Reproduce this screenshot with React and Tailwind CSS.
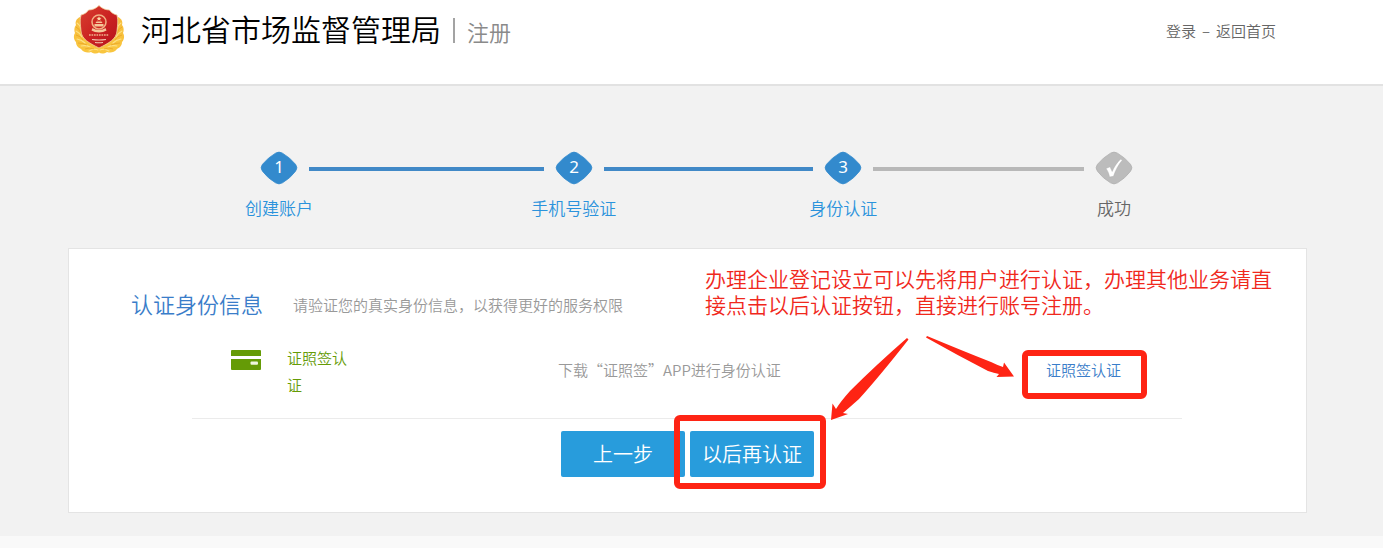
import React from "react";

const steps = [
  { label: "创建账户", mark: "1", grow: "grow-[235]", state: "done" },
  { label: "手机号验证", mark: "2", grow: "grow-[210]", state: "done" },
  { label: "身份认证", mark: "3", grow: "grow-[211]", state: "current" },
  { label: "成功", mark: "", grow: "", state: "pending" },
];

// Label and line colors for each step state
const labelStyles = {
  done: "text-[#2b93dc]",
  current: "text-[#2b93dc]",
  pending: "text-[#666666]",
};

const lineStyles = {
  done: "bg-[#4189c7]",
  current: "bg-[#b8b8b8]",
};

const Emblem = () => (
  <svg className="h-[52px] w-[52px] shrink-0" viewBox="0 0 52 52" aria-hidden="true">
    <defs>
      <linearGradient id="shield" x1="0" y1="0" x2="1" y2="1">
        <stop offset="0" stopColor="#d8402f" />
        <stop offset="0.5" stopColor="#cb2222" />
        <stop offset="1" stopColor="#b5141c" />
      </linearGradient>
      <linearGradient id="wheat" x1="0" y1="0" x2="0" y2="1">
        <stop offset="0" stopColor="#f7bd3c" />
        <stop offset="1" stopColor="#f9c63f" />
      </linearGradient>
    </defs>
    {/* Wheat */}
    <path
      d="M7 13C3 15 2 18 3 21C1 23 1 27 2 29C0 32 1 36 3 38C3 42 6 44 8 45C11 49 15 49 18 48C21 50 24 50 26 48.500C28 50 31 50 34 48C37 49 41 49 44 45C46 44 49 42 49 38C51 36 52 32 50 29C51 27 51 23 49 21C50 18 49 15 45 13Z"
      fill="url(#wheat)"
    />
    <g fill="none" stroke="#fde184" strokeWidth="1.1" strokeLinecap="round">
      <path d="M4 19Q7 21 8 25M3 27Q7 29 9 33M4 35Q9 36 12 39M8 42Q13 41 17 43M16 47Q21 44 25 46" />
      <path d="M48 19Q45 21 44 25M49 27Q45 29 43 33M48 35Q43 36 40 39M44 42Q39 41 35 43M36 47Q31 44 27 46" />
    </g>
    <g fill="none" stroke="#e39b20" strokeWidth="0.6">
      <path d="M3 23Q7 25 8 29M3 31Q8 32 10 36M5 39Q10 39 14 41M12 45Q16 43 21 45" />
      <path d="M49 23Q45 25 44 29M49 31Q44 32 42 36M47 39Q42 39 38 41M40 45Q36 43 31 45" />
    </g>
    {/* Shield */}
    <path
      d="M26 1.500C23 4.500 19 6 15.500 6C14 8.500 11 10.500 8 11C6.500 17 7.500 21 8 27C8.500 35 16 39 26 44C36 39 43.500 35 44 27C44.500 21 45.500 17 44 11C41 10.500 38 8.500 36.500 6C33 6 29 4.500 26 1.500Z"
      fill="url(#shield)"
      stroke="#f3d3a0"
      strokeWidth="0.8"
    />
    <circle cx="26" cy="18" r="7" fill="#cd2a22" stroke="#f2b184" strokeWidth="1.5" />
    <path d="M26 12.2l.7 1.6 1.8.1-1.4 1.1.5 1.7-1.6-1-1.6 1 .5-1.7-1.4-1.1 1.8-.1z" fill="#ffd9a8" />
    <path d="M22.500 19h7l-1-1.600h-5zM21.500 20h9v2.500h-9z" fill="#f5c79a" />
    <path d="M19.500 24c3 2.600 10 2.600 13 0l1 2.500c-4 2.500-11 2.500-15 0z" fill="#f5c79a" />
    <path d="M16 31h20" stroke="#f0b08a" strokeWidth="1.6" strokeDasharray="1.7 0.8" />
    <path d="M19 35.500Q26 36.500 33 35.500M22 38.500Q26 39 30 38.500" fill="none" stroke="#f3c8b0" strokeWidth="1.2" />
  </svg>
);

const StepBadge = ({ mark, state }) => (
  <svg className="h-9 w-[38px]" viewBox="0 0 38 36" aria-hidden="true">
    <path
      d="M15.500 3.200Q19 1 22.500 3.200Q30 7.500 35.500 14.300Q38.300 17.800 35.500 21.300Q30 28.500 22.500 32.800Q19 35 15.500 32.800Q8 28.500 2.500 21.300Q-.3 17.800 2.500 14.300Q8 7.500 15.500 3.200Z"
      fill={state === "pending" ? "#bcbcbc" : "#338acd"}
      stroke={state === "pending" ? "#b0b0b0" : "#338acd"}
      strokeWidth="0.8"
    />
    {mark ? (
      <text x="19" y="23" textAnchor="middle" fontSize="17" fontWeight="400" fill="#ffffff" fontFamily="Noto Sans, sans-serif">
        {mark}
      </text>
    ) : (
      <path
        d="M11 18.500L15 16.800L17.200 21.500C19 17 22 12.500 25.500 9.200L27.500 10C23.500 14.500 20.500 20 18.500 26.300L14.500 27C14 23.500 12.800 21 11 18.500Z"
        fill="#ffffff"
        stroke="#a8a8a8"
        strokeWidth="0.4"
      />
    )}
  </svg>
);

const CardIcon = () => (
  <svg className="h-5 w-[30px] shrink-0" viewBox="0 0 30 20" aria-hidden="true">
    <path d="M1 0H29Q30 0 30 1V6H0V1Q0 0 1 0Z" fill="#659b06" />
    <path d="M0 9H30V19Q30 20 29 20H1Q0 20 0 19Z" fill="#659b06" />
    <rect x="19.500" y="11.500" width="7.500" height="3.200" rx="1" fill="#eef6dc" />
  </svg>
);

const Header = () => (
  <header className="flex h-[86px] justify-between border-b-2 border-[#e2e2e2] bg-white pr-[107px] pl-[73px]">
    <div className="flex items-start pt-1">
      <Emblem />
      <h1 className="ml-4 text-[30px] leading-[48px] text-black">河北省市场监督管理局</h1>
      <div className="mt-3.5 ml-3 h-[25px] w-0.5 bg-[#a3a3a3]" />
      <span className="ml-3 text-[22px] leading-[54px] text-[#8a8a8a]">注册</span>
    </div>
    <nav className="flex gap-1.5 pt-5 text-[15px] leading-[22px] text-[#666666]">
      <a href="#login">登录</a>
      <span>–</span>
      <a href="#home">返回首页</a>
    </nav>
  </header>
);

const App = () => {
  return (
    <div
      lang="zh-CN"
      className="min-h-screen bg-[#f9f9f9] font-['Noto_Sans_CJK_SC','Noto_Sans',sans-serif] font-[350]"
    >
      <Header />

      <main className="bg-[#f2f2f2] pt-16 pr-[76px] pb-[23px] pl-[68px]">
        {/* Registration steps */}
        <ol className="flex items-start pr-[163px] pl-[181px]">
          {steps.map((step) => (
            <React.Fragment key={step.label}>
              <li className="flex w-[60px] shrink-0 flex-col items-center">
                <StepBadge mark={step.mark} state={step.state} />
                <span
                  className={`mt-2.5 text-[17px] leading-6 whitespace-nowrap ${labelStyles[step.state]}`}
                >
                  {step.label}
                </span>
              </li>
              {step.grow && (
                <li
                  aria-hidden="true"
                  className={`mt-[17px] h-1 basis-0 ${step.grow} ${lineStyles[step.state]}`}
                />
              )}
            </React.Fragment>
          ))}
        </ol>

        {/* Identity panel */}
        <section className="relative mt-7 border border-[#e4e4e4] bg-white pb-[35px]">
          <div className="flex items-start justify-between pr-7 pl-[62px]">
            <div className="flex items-center gap-[30px] pt-[38px]">
              <h2 className="text-[22px] leading-8 text-[#3a7dc9]">认证身份信息</h2>
              <p className="pt-1 text-[15px] leading-6 text-[#999999]">
                请验证您的真实身份信息，以获得更好的服务权限
              </p>
            </div>
            <p className="mt-4 w-[573px] text-[21px] leading-[26px] text-[#f0281c]">
              办理企业登记设立可以先将用户进行认证，办理其他业务请直接点击以后认证按钮，直接进行账号注册。
            </p>
          </div>

          <div className="mr-[124px] ml-[123px] flex items-start border-b border-[#ebebeb] pt-[25px] pr-[61px] pb-5 pl-[39px]">
            <div className="pt-1.5">
              <CardIcon />
            </div>
            <h3 className="ml-[26px] w-[61px] text-[15px] leading-[27px] text-[#659b06]">证照签认证</h3>
            <p className="ml-[210px] pt-3 text-[15px] leading-[27px] text-[#999999]">
              下载“证照签”APP进行身份认证
            </p>
            <div className="relative mt-3 ml-auto">
              <a href="#verify" className="block text-[15px] leading-[27px] text-[#3a7dc9]">
                证照签认证
              </a>
              <div className="pointer-events-none absolute -top-1.5 -right-[26px] -bottom-4 -left-6 rounded-md border-6 border-[#fe2414]" />
            </div>
          </div>

          <div className="flex justify-center gap-[5px] pt-3">
            <button type="button" className="h-[46px] w-[124px] rounded-xs bg-[#289cdc] text-xl text-white">
              上一步
            </button>
            <div className="relative">
              <button type="button" className="h-[46px] w-[124px] rounded-xs bg-[#289cdc] text-xl text-white">
                以后再认证
              </button>
              <div className="pointer-events-none absolute -top-4 -right-3 -bottom-3 -left-4 rounded-md border-6 border-[#fe2414]" />
            </div>
          </div>

          {/* Arrows from the note to the two actions */}
          <svg
            className="pointer-events-none absolute top-[85px] right-[290px] h-[90px] w-[190px]"
            viewBox="0 0 190 90"
            aria-hidden="true"
          >
            <path
              d="M81 4L82.500 5.500Q53 43 33 65Q24 73 17 79L22 80L5 86L6.500 69.500L10 75Q15 67 24 57Q50 31 81 4Z"
              fill="#fe2414"
            />
            <path
              d="M101 2L100 3.500Q131 21 162 37Q168 39 173 40L170.500 43L188 42.500L178 28.500L177 33Q171 31 165 28Q137 17 101 2Z"
              fill="#fe2414"
            />
          </svg>
        </section>
      </main>
    </div>
  );
};

export default App;
